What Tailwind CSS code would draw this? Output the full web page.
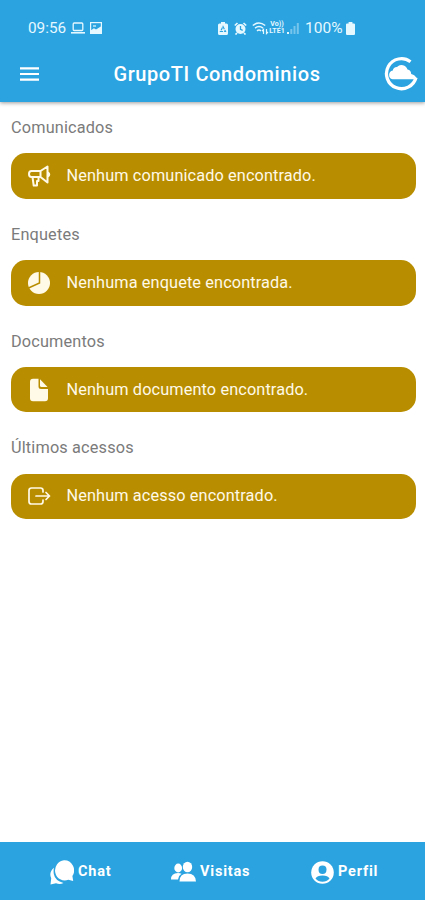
<!DOCTYPE html>
<html lang="pt-BR">
  <head>
    <meta charset="UTF-8" />
    <meta name="viewport" content="width=device-width, initial-scale=1.0" />
    <title>GrupoTI Condominios</title>
    <script src="https://cdn.jsdelivr.net/npm/@tailwindcss/browser@4"></script>
  </head>
  <body class="flex h-screen flex-col overflow-hidden bg-white font-['Roboto',sans-serif]">
    <header class="h-[102px] shrink-0 bg-[#2ba3e0] pt-[18px] text-white shadow-[0_1px_4px_rgba(0,0,0,0.4)]">
      <!-- Status bar -->
      <div class="flex h-5 items-center pl-7 text-[#e6f8ff]">
        <span class="w-[38px] text-[15.3px] leading-5 whitespace-nowrap">09:56</span>
        <svg class="ml-[5px] h-3 w-[14px]" viewBox="0 0 14 12" fill="none" stroke="currentColor" stroke-width="1.3">
          <rect x="2.2" y="1" width="9.6" height="7.5" rx="1" />
          <path d="M0 10.8h14" stroke-width="1.6" />
        </svg>
        <svg class="ml-[5px] h-3 w-3" viewBox="0 0 12 12" fill="none" stroke="currentColor" stroke-width="1.2">
          <rect x=".6" y=".6" width="10.8" height="10.8" />
          <path d="M1 9l3-2 2 1.2L11 5v6H1z" fill="currentColor" />
          <path d="M3 4h3" />
        </svg>
        <svg class="ml-[116px] h-[13px] w-[10px]" viewBox="0 0 10 13">
          <path d="M3 0h4v1.5h1.5q1.5 0 1.5 1.5v8.5q0 1.5-1.5 1.5h-7Q0 13 0 11.500V3q0-1.500 1.500-1.500H3z" fill="currentColor" />
          <path d="M5 4.500l2.500 5h-5z" fill="none" stroke="#2ba3e0" stroke-width="1.200" stroke-dasharray="3 1" />
        </svg>
        <svg class="ml-[6px] h-[13px] w-[13px]" viewBox="0 0 13 13">
          <circle cx="6.500" cy="7" r="5" fill="currentColor" />
          <path d="M.8 3.500L3.500 1M12.200 3.500L9.500 1M3 11l-1.500 1.500M10 11l1.500 1.500" stroke="currentColor" stroke-width="1.700" />
          <path d="M6.500 4v3.300l2.200 1" fill="none" stroke="#2ba3e0" stroke-width="1.300" />
        </svg>
        <svg class="ml-[5px] h-[14px] w-[17px]" viewBox="0 0 17 14" fill="none" stroke="currentColor" stroke-width="1.500">
          <path d="M.8 4.500q6-5 12.400 0M3 7.200q4-3.200 8 0M5 9.800q2-1.500 4 0" />
          <path d="M11.500 13V8.500L10 10M14.500 8v4.500L16 11" stroke-width="1.200" />
        </svg>
        <div class="flex h-[14px] w-4 flex-col items-center text-[7px] leading-[7px] font-bold whitespace-nowrap">
          <span>Vo))</span>
          <span>LTE1</span>
        </div>
        <svg class="ml-[2px] h-3 w-3" viewBox="0 0 12 12" fill="currentColor">
          <path d="M0 10h2v2H0z" />
          <path d="M3.300 7h2v5h-2zM6.500 4h2v8h-2zM9.800 1h2v11h-2z" opacity=".4" />
        </svg>
        <span class="ml-[6px] w-10 text-[15.5px] leading-5 whitespace-nowrap">100%</span>
        <svg class="ml-px h-[13px] w-[9px]" viewBox="0 0 8 13" preserveAspectRatio="none" fill="currentColor">
          <path d="M2.300 0h3.400v1.500H7q1 0 1 1V12q0 1-1 1H1q-1 0-1-1V2.500q0-1 1-1h1.300z" />
        </svg>
      </div>

      <!-- App bar -->
      <div class="mt-2 flex h-14 items-center justify-between pr-[7px] pl-5">
        <svg class="h-[14px] w-[19px]" viewBox="0 0 19 14" fill="currentColor">
          <path d="M0 .3h19v2.200H0zM0 5.900h19v2.200H0zM0 11.500h19v2.200H0z" />
        </svg>
        <h1 class="ml-[11px] text-[20px] leading-6 font-medium tracking-[0.6px] whitespace-nowrap">GrupoTI Condominios</h1>
        <svg class="h-9 w-[34px]" viewBox="0 0 34 36">
          <path d="M26.500 5.700A15 15 0 1 0 32 21.500" fill="none" stroke="currentColor" stroke-width="3.300" />
          <path d="M8.500 23.300a4.500 4.500 0 0 1 .3-8.800 4.200 4.200 0 0 1 4.200-3.600 6.300 6.300 0 0 1 10.500 2.500 4.700 4.700 0 0 1 3.700 4.600q4.500.8 5.500 5.300z" fill="currentColor" />
        </svg>
      </div>
    </header>

    <main class="flex grow flex-col gap-[26px] pt-4 pr-[9px] pl-[11px] text-[16.3px]">
      <section>
        <h2 class="h-5 leading-5 tracking-[0.16px] text-[#7b7b7b]">Comunicados</h2>
        <div class="mt-[15.3px] flex h-[45.5px] items-center rounded-[15px] bg-[#b88e00] pl-4 text-[#fff9e8]">
          <svg class="h-6 w-6" viewBox="0 0 24 24" fill="none" stroke="currentColor" stroke-width="2" stroke-linejoin="round" stroke-linecap="round">
            <path d="M13.500 7H4.500Q2 7 2 10t2.500 3h9zM13.500 7L20.500 2.500v16L13.500 13M5.500 13l1.200 8.500h3.300V17h1.500v-4M21 8.500q2.500 2 0 4" />
          </svg>
          <p class="ml-[15.500px] leading-5 tracking-[0.120px]">Nenhum comunicado encontrado.</p>
        </div>
      </section>
      <section>
        <h2 class="h-5 leading-5 tracking-[0.16px] text-[#7b7b7b]">Enquetes</h2>
        <div class="mt-[15.3px] flex h-[45.5px] items-center rounded-[15px] bg-[#b88e00] pl-4 text-[#fff9e8]">
          <svg class="h-6 w-6" viewBox="0 0 24 24">
            <circle cx="12" cy="12" r="11" fill="currentColor" />
            <path d="M12.500 0v12L1.500 17" fill="none" stroke="#b88e00" stroke-width="1.500" />
          </svg>
          <p class="ml-[15.500px] leading-5 tracking-[0.120px]">Nenhuma enquete encontrada.</p>
        </div>
      </section>
      <section>
        <h2 class="h-5 leading-5 tracking-[0.16px] text-[#7b7b7b]">Documentos</h2>
        <div class="mt-[15.3px] flex h-[45.5px] items-center rounded-[15px] bg-[#b88e00] pl-4 text-[#fff9e8]">
          <svg class="h-6 w-6" viewBox="0 0 24 24" fill="currentColor">
            <path d="M6 .8h5.500v7.700q0 2.500 2.500 2.500h7v9.200q0 3-3 3H6q-3 0-3-3V3.800q0-3 3-3z" />
            <path d="M13 1.300L20.500 9H14.500Q13 9 13 7.500z" />
          </svg>
          <p class="ml-[15.500px] leading-5 tracking-[0.120px]">Nenhum documento encontrado.</p>
        </div>
      </section>
      <section>
        <h2 class="h-5 leading-5 tracking-[0.16px] text-[#7b7b7b]">Últimos acessos</h2>
        <div class="mt-[15.3px] flex h-[45.5px] items-center rounded-[15px] bg-[#b88e00] pl-4 text-[#fff9e8]">
          <svg class="h-6 w-6" viewBox="0 0 24 24" fill="none" stroke="currentColor" stroke-width="1.700" stroke-linecap="round" stroke-linejoin="round">
            <path d="M16 8V6.500Q16 4 13.500 4h-9Q2 4 2 6.500v11Q2 20 4.500 20h9q2.500 0 2.500-2.500V16M9 12h13.500M19 8.500l3.500 3.500-3.500 3.500" />
          </svg>
          <p class="ml-[15.500px] leading-5 tracking-[0.120px]">Nenhum acesso encontrado.</p>
        </div>
      </section>
    </main>

    <!-- Bottom tabs -->
    <nav class="flex h-[58px] shrink-0 items-center bg-[#2ba3e0] pt-[2px] pl-[50px] text-[14.5px] font-bold tracking-[0.8px] text-white">
      <div class="flex w-[121px] items-center">
        <svg class="h-[25px] w-6" viewBox="0 0 24 24" preserveAspectRatio="none" fill="currentColor">
          <path d="M4 7.500q-5.500 4.500-2.800 10l-.7 6 5.500-1.200q4 1.500 7.500-.3Q5 20 3.800 13.500 3.300 10 4 7.500z" />
          <path d="M14 .3a9.700 9.700 0 1 0 4.300 18.700l4.900 1.200-.8-4.800A9.700 9.700 0 0 0 14 .3z" />
        </svg>
        <span class="ml-1">Chat</span>
      </div>
      <div class="flex w-[140px] items-center">
        <svg class="h-[22px] w-[26px]" viewBox="0 0 26 22" fill="currentColor">
          <ellipse cx="16.500" cy="6" rx="4.700" ry="5.300" />
          <path d="M8.500 20.500q0-8 8-8t8.500 8z" />
          <ellipse cx="7.200" cy="7" rx="3.900" ry="4.400" />
          <path d="M0 18.500Q0 12 7 12q2.200 0 3.500.8-3 1.700-3.500 5.700z" />
        </svg>
        <span class="ml-[3px]">Visitas</span>
      </div>
      <div class="flex items-center">
        <svg class="h-[23px] w-[23px]" viewBox="0 0 23 23">
          <circle cx="11.500" cy="11.500" r="11.300" fill="currentColor" />
          <ellipse cx="11.500" cy="8.800" rx="4" ry="4.200" fill="#2ba3e0" />
          <path d="M4.500 17.500q1.500-3 7-3t7 3q-2.800 3.300-7 3.300t-7-3.300z" fill="#2ba3e0" />
        </svg>
        <span class="ml-1">Perfil</span>
      </div>
    </nav>
  </body>
</html>
